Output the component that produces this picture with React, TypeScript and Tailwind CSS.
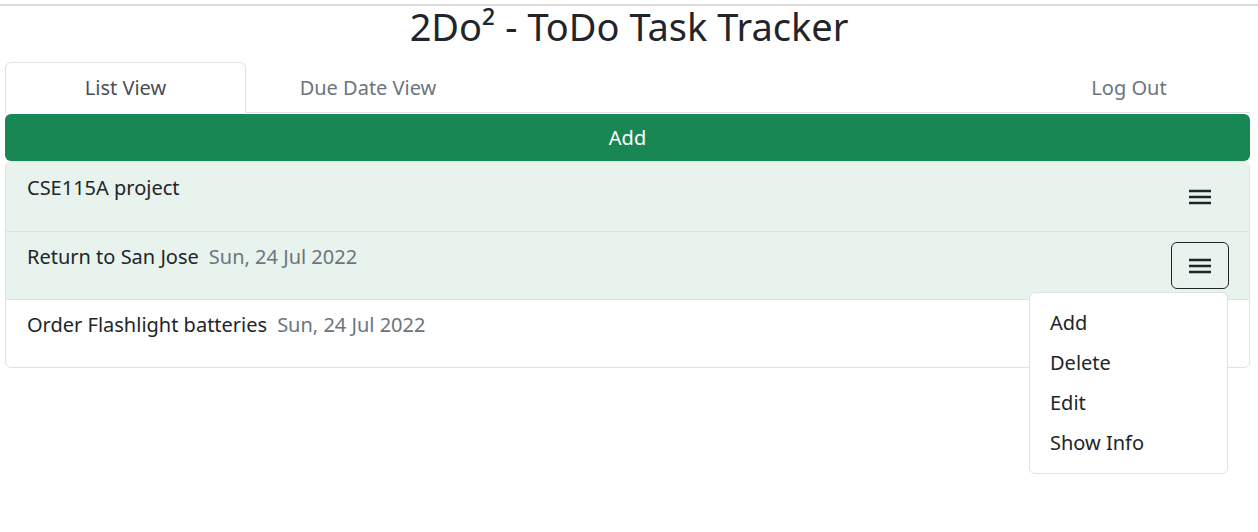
import React from "react";

const MenuIcon = () => (
  <svg width="22" height="16" viewBox="0 0 22 16" fill="#212529">
    <rect x="0" y="0.75" width="22" height="2.5" />
    <rect x="0" y="6.75" width="22" height="2.5" />
    <rect x="0" y="12.75" width="22" height="2.5" />
  </svg>
);

type Task = { title: string; date?: string; tinted: boolean; open?: boolean };

const tasks: Task[] = [
  { title: "CSE115A project", tinted: true },
  { title: "Return to San Jose", date: "Sun, 24 Jul 2022", tinted: true, open: true },
  { title: "Order Flashlight batteries", date: "Sun, 24 Jul 2022", tinted: false },
];

const App = () => {
  return (
    <div className="min-h-[532px] bg-white font-['Noto_Sans',sans-serif] text-[#212529]">
      <div className="pt-1">
        <div className="h-[2px] bg-[#dcdcdc]" />
      </div>

      <h1 className="h-[56px] text-center text-[38px] leading-[40px]">2Do² - ToDo Task Tracker</h1>

      <div className="pl-[5px] pr-[8px]">
        <div className="flex h-[51px] border-b border-[#dee2e6]">
          <button className="-mb-px w-[241px] rounded-t-md border border-[#dee2e6] border-b-white bg-white text-[20px] text-[#495057]">
            List View
          </button>
          <button className="-mb-px w-[244px] border border-transparent text-[20px] text-[#6c757d]">
            Due Date View
          </button>
          <div className="flex-1" />
          <button className="-mb-px w-[242px] border border-transparent text-[20px] text-[#6c757d]">
            Log Out
          </button>
        </div>

        <button className="mt-px h-[47px] w-full rounded-md bg-[#198754] text-[20px] text-white">
          Add
        </button>

        <div className="rounded-md border border-[#dee2e6]">
          {tasks.map((t, i) => (
            <div
              key={t.title}
              className={`flex items-start justify-between pl-[21px] pr-5 ${
                i > 0 ? "h-[68px] border-t border-[#dee2e6] pt-[10px]" : "h-[69px] pt-[11px]"
              } ${t.tinted ? "bg-[#e8f3ee]" : "bg-white"} ${i === 0 ? "rounded-t-md" : ""} ${
                i === tasks.length - 1 ? "rounded-b-md" : ""
              }`}
            >
              <div className="text-[20px] leading-[30px]">
                {t.title}
                {t.date && <span className="ml-[10px] text-[#6c757d]">{t.date}</span>}
              </div>
              {i < 2 && (
                <div className="relative">
                  <button
                    className={`flex h-[47px] w-[58px] items-center justify-center rounded-md border ${
                      t.open ? "border-[#212529]" : "border-transparent"
                    }`}
                  >
                    <MenuIcon />
                  </button>
                  {t.open && (
                    <div className="absolute right-px top-[50px] z-10 w-[199px] rounded-md border border-[#dee2e6] bg-white py-[10px] text-[20px]">
                      {["Add", "Delete", "Edit", "Show Info"].map((m) => (
                        <div key={m} className="px-5 py-[5px] leading-[30px]">
                          {m}
                        </div>
                      ))}
                    </div>
                  )}
                </div>
              )}
            </div>
          ))}
        </div>
      </div>
    </div>
  );
};

export default App;
